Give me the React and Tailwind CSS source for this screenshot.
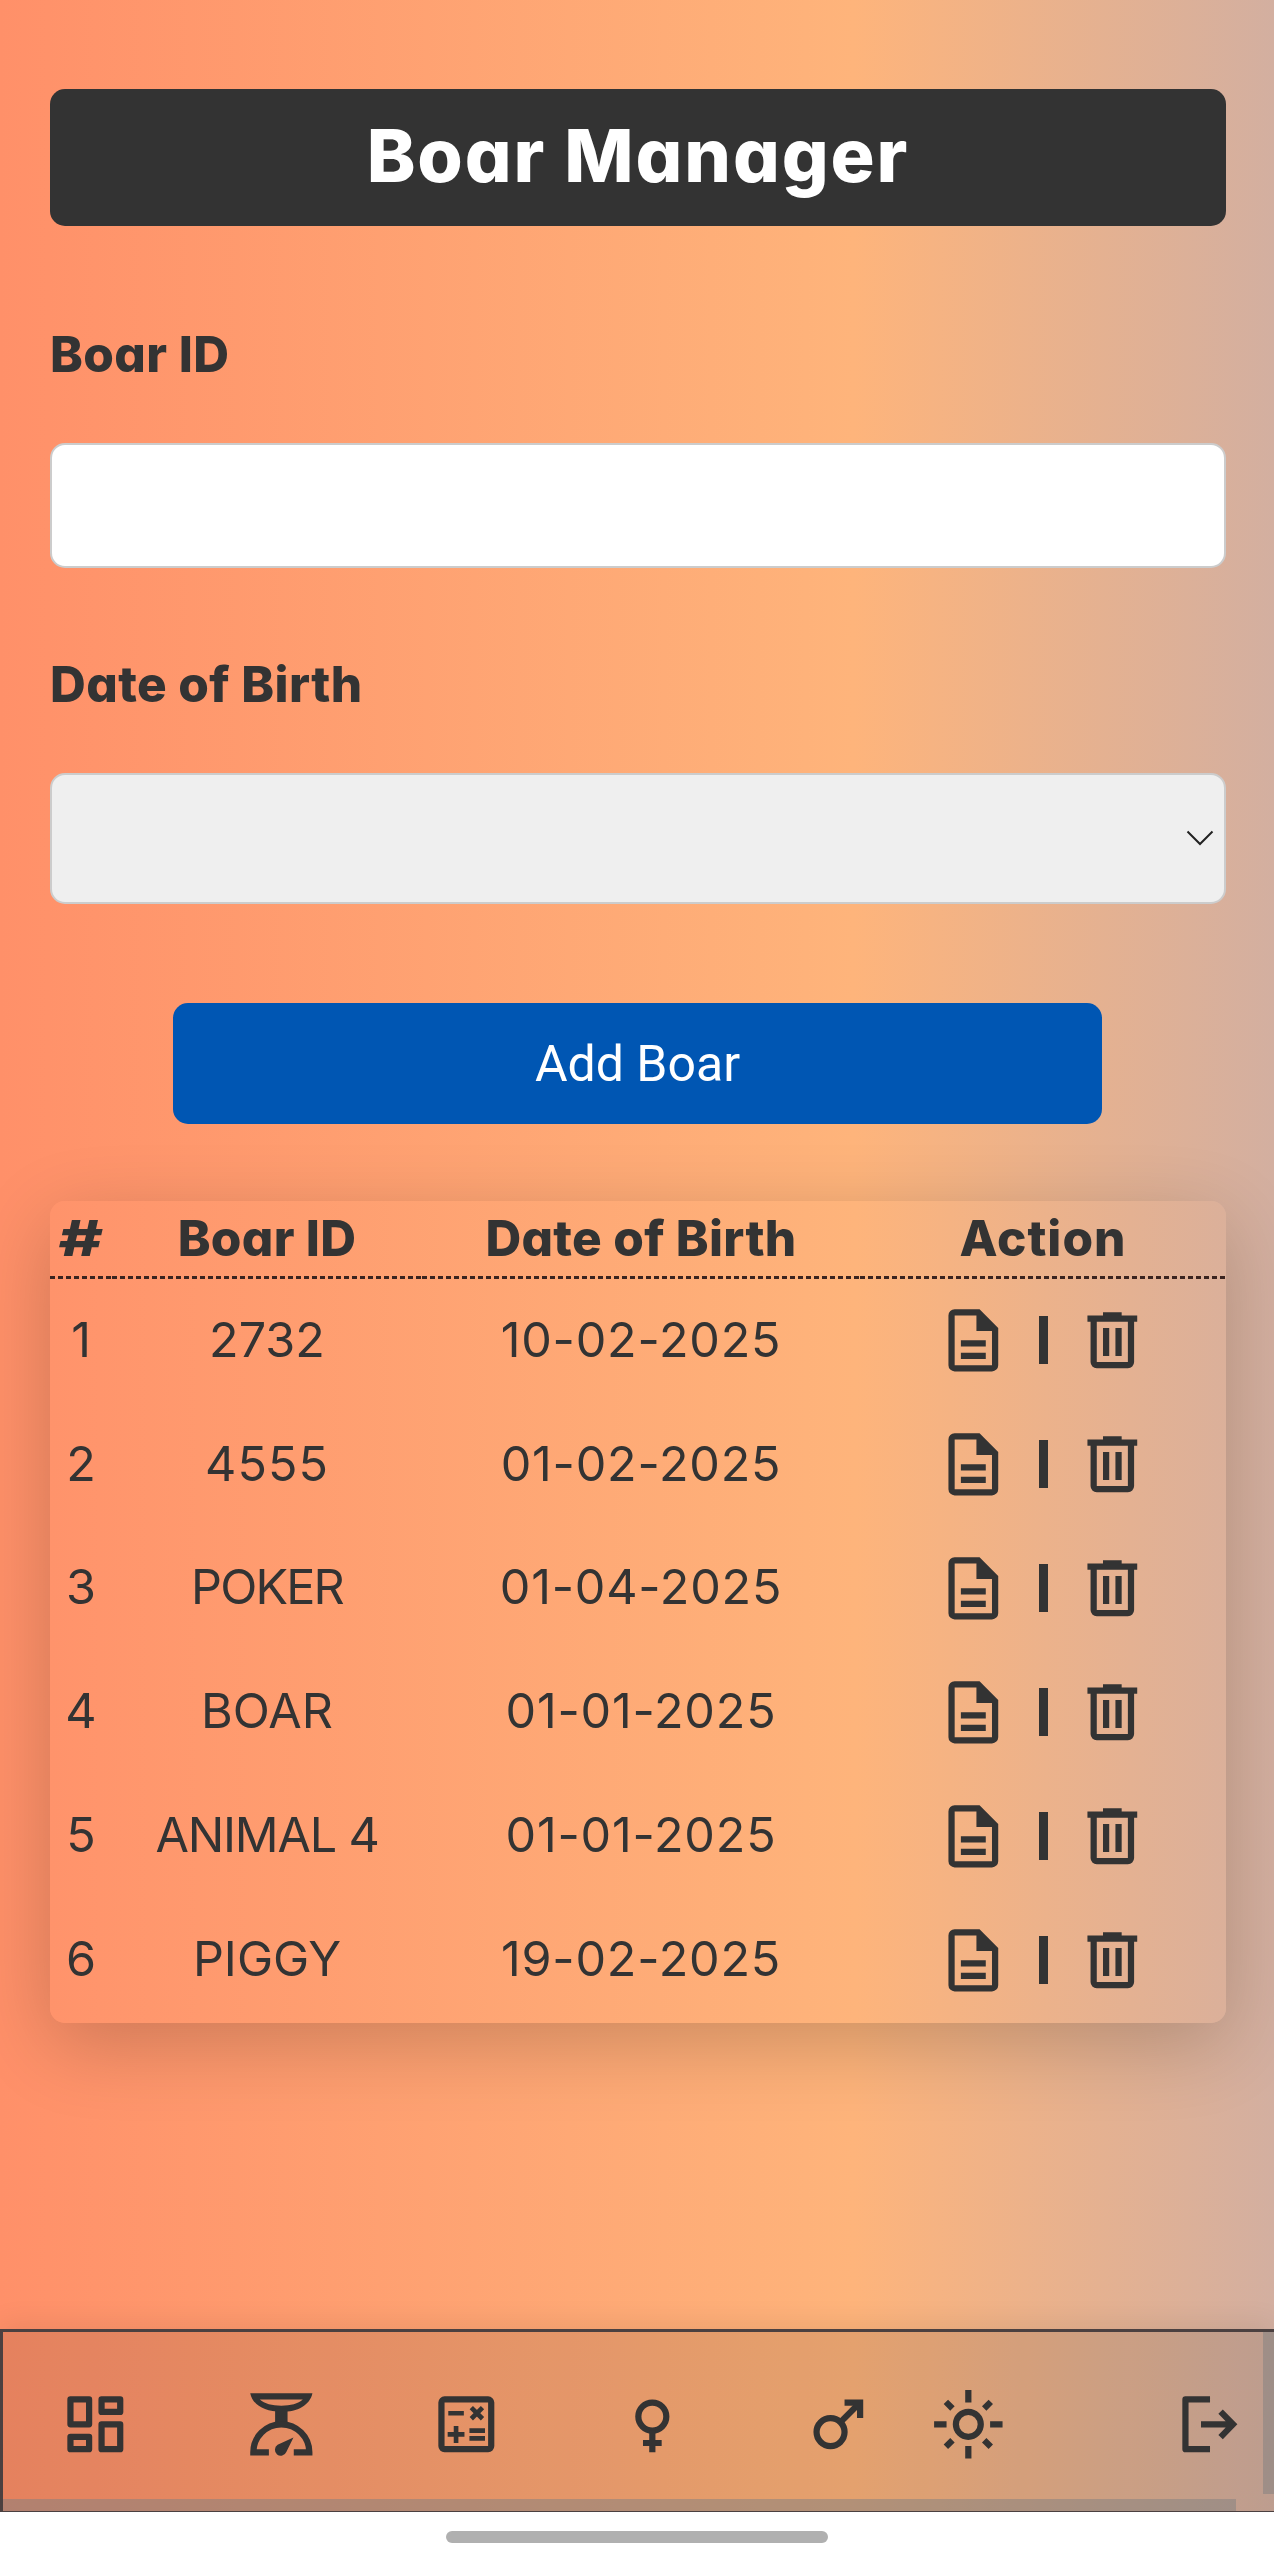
const boars = [
  ["1", "2732", "10-02-2025", ""],
  ["2", "4555", "01-02-2025", "tracking-[1px]"],
  ["3", "POKER", "01-04-2025", "tracking-[-1.8px]"],
  ["4", "BOAR", "01-01-2025", ""],
  ["5", "ANIMAL 4", "01-01-2025", "tracking-[-1.2px]"],
  ["6", "PIGGY", "19-02-2025", ""],
];

const COLS = "grid grid-cols-[62px_310px_438px_1fr]";
const DASH =
  "h-[3px] bg-[repeating-linear-gradient(90deg,#3a2420_0px,#3a2420_5.33px,transparent_5.33px,transparent_8px)]";

function Icon({ children, className = "" }) {
  return (
    <svg viewBox="0 0 24 24" fill="none" stroke="#333" strokeWidth="2" className={"h-[74.67px] w-[74.67px] shrink-0 " + className}>
      {children}
    </svg>
  );
}

const DashboardIcon = () => (
  <Icon>
    <path strokeLinejoin="round" d="M4 4h6v8H4zM14 4h6v4h-6zM14 12h6v8h-6zM4 16h6v4H4z" />
  </Icon>
);

const ScaleIcon = () => (
  <Icon>
    <path fill="#333" stroke="none" fillRule="evenodd" d="M2 2H22C21.2 5.8 17.3 8 12 8S2.8 5.8 2 2ZM5.1 4C6.6 5.3 9 6 12 6S17.4 5.3 18.9 4Z" />
    <path fill="#333" stroke="none" d="M10 7h4v5h-4z" />
    <path d="M8 21H3A9 9 0 0 1 21 21H16" />
    <path fill="#333" stroke="none" d="M15.9 16.2 13.6 20.9A1.9 1.9 0 1 1 10.8 18.6Z" />
  </Icon>
);

const CalculatorIcon = () => (
  <Icon>
    <path fill="#333" stroke="none" fillRule="evenodd" d="M5 3H19A2 2 0 0 1 21 5V19A2 2 0 0 1 19 21H5A2 2 0 0 1 3 19V5A2 2 0 0 1 5 3ZM5 5V19H19V5Z" />
    <path strokeWidth="1.5" d="M6.2 8.45h5M13 14h5M13 16.5h5M6 15.25h5.4M8.7 12.5v5.5M13.6 6.6l3.6 3.6M17.2 6.6l-3.6 3.6" />
  </Icon>
);

const FemaleIcon = () => (
  <Icon>
    <circle cx="12" cy="9.5" r="4.5" />
    <path d="M12 14v7M9 18h6" />
  </Icon>
);

const MaleIcon = () => (
  <Icon>
    <circle cx="9.5" cy="14.5" r="4.5" />
    <path d="M12.7 11.3 18.6 5.4" />
    <path fill="#333" stroke="none" d="M14 4h6v6h-2V7.2L16.8 6H14z" />
  </Icon>
);

const SunIcon = () => (
  <Icon className="overflow-visible">
    <circle cx="12" cy="12" r="4" />
    <path d="M12 1v4M12 19v4M1 12h4M19 12h4M4.78 4.78 6.9 6.9M17.1 17.1l2.12 2.12M19.22 4.78 17.1 6.9M6.9 17.1l-2.12 2.12" />
  </Icon>
);

const LogoutIcon = () => (
  <Icon>
    <path strokeLinejoin="round" d="M11.9 4H4V20H11.9" />
    <path d="M9 12H19.3M15.3 7.9 19.3 12 15.3 16.1" />
  </Icon>
);

const FileIcon = () => (
  <Icon>
    <path fill="#333" stroke="none" fillRule="evenodd" d="M6 2H14L20 8V20A2 2 0 0 1 18 22H6A2 2 0 0 1 4 20V4A2 2 0 0 1 6 2ZM6 4V20H18V9H13V4Z" />
    <path d="M8 13h8M8 17h8" />
  </Icon>
);

const TrashIcon = () => (
  <Icon>
    <path fill="#333" stroke="none" fillRule="evenodd" d="M9 3H15V4H20V6H19V19A2 2 0 0 1 17 21H7A2 2 0 0 1 5 19V6H4V4H9ZM7 6V19H17V6Z" />
    <path d="M10 8v9M14 8v9" />
  </Icon>
);

export default function App() {
  return (
    <div className="flex h-[2560px] w-[1274px] flex-col overflow-hidden bg-white font-['Inter',sans-serif] text-[#333] [font-feature-settings:'cv11']">
      <div className="flex h-[2512px] flex-col bg-[linear-gradient(90deg,#ff9069_0%,#feb47b_67%,#d3afa0_100%)]">
        <main className="flex h-[2329px] flex-col pt-[89px] pr-[48px] pl-[50px]">
          <h1 className="flex h-[137px] shrink-0 items-center justify-center rounded-[15px] bg-[#333] pb-[4px] text-[73.5px] leading-none font-extrabold tracking-[1.9px] text-white">
            Boar Manager
          </h1>
          <label className="mt-[104px] flex h-[50px] items-center text-[49.5px] leading-none font-extrabold tracking-[0.4px]">
            Boar ID
          </label>
          <div className="mt-[63px] h-[125px] shrink-0 rounded-[15px] border-2 border-[#ccc] bg-white" />
          <label className="mt-[92px] flex h-[50px] items-center text-[49.5px] leading-none font-extrabold tracking-[0.4px]">
            Date of Birth
          </label>
          <div className="mt-[63px] flex h-[131px] shrink-0 items-center justify-end rounded-[15px] border-2 border-[#ccc] bg-[#efefef] pr-[10px] pb-[1px]">
            <svg width="28" height="16" viewBox="0 0 28 16" fill="none" stroke="#222" strokeWidth="2">
              <path d="M1.5 1.5 14 14 26.5 1.5" />
            </svg>
          </div>
          <button className="mt-[99px] ml-[123px] flex h-[121px] w-[929px] shrink-0 items-center justify-center rounded-[15px] bg-[#0056b3] font-['Roboto'] text-[50px] leading-none text-white">
            Add Boar
          </button>
          <div className="mt-[77px] h-[822px] shrink-0 rounded-[15px] bg-[linear-gradient(90deg,#ff936b_0%,#feb47b_68.5%,#dbb09a_100%)] shadow-[0_21px_80px_rgba(0,0,0,0.2)]">
            <div className={COLS + " h-[75px] items-center text-center text-[49.5px] leading-none font-extrabold tracking-[0.3px]"}>
              <span className="scale-x-[1.38]">#</span>
              <span>Boar ID</span>
              <span>Date of Birth</span>
              <span className="tracking-[1px]">Action</span>
            </div>
            <div className={COLS}>
              <div className={DASH} />
              <div className={DASH} />
              <div className={DASH} />
              <div className={DASH} />
            </div>
            {boars.map(([n, id, date, tracking]) => (
              <div key={n} className={COLS + " h-[123.9px] items-center text-center text-[48.5px] leading-none"}>
                <span className="pb-[2px]">{n}</span>
                <span className={"pb-[2px] " + tracking}>{id}</span>
                <span className="pb-[2px] tracking-[0.8px]">{date}</span>
                <div className="flex items-center justify-center gap-[27.4px] pb-[1px]">
                  <FileIcon />
                  <span className="h-12 w-[9px] bg-[#333]" />
                  <TrashIcon />
                </div>
              </div>
            ))}
          </div>
        </main>
        <nav className="relative flex h-[183px] shrink-0 items-center border-t-[3px] border-b border-l-[3px] border-[#4b4040] bg-black/10 pl-[55px] shadow-[0_-5px_27px_rgba(0,0,0,0.08)]">
          <div className="flex items-center gap-[111px] pt-[6px]">
            <DashboardIcon />
            <ScaleIcon />
            <CalculatorIcon />
            <FemaleIcon />
            <MaleIcon />
          </div>
          <div className="ml-[55.5px] pt-[6px]">
            <SunIcon />
          </div>
          <div className="ml-[168px] pt-[6px]">
            <LogoutIcon />
          </div>
          <div className="absolute bottom-0 left-0 h-3 w-[1233px] bg-[#808080]/50" />
          <div className="absolute top-0 right-0 h-[162px] w-[11px] bg-[#808080]/50" />
        </nav>
      </div>
      <div className="z-10 flex h-12 justify-center bg-white pt-[19px]">
        <div className="h-3 w-[382px] rounded-full bg-[#b0b0b0]" />
      </div>
    </div>
  );
}
